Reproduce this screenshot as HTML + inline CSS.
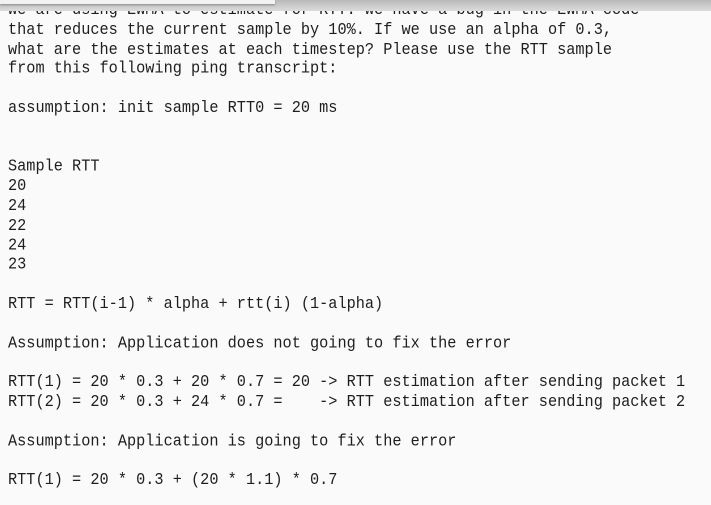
<!DOCTYPE html>
<html><head><style>
html,body{margin:0;padding:0;width:711px;height:505px;overflow:hidden;background:#fafafa;}
pre{position:absolute;left:8px;top:1px;margin:0;font-family:"Liberation Mono",monospace;font-size:15.25px;line-height:19.58px;color:#1e1e1e;transform:scaleY(1.1);transform-origin:0 0;}
.bar{position:absolute;left:0;top:0;width:711px;height:11px;background:linear-gradient(#b9b9b9,#dcdcdc);}
.box{position:absolute;left:0;top:0;width:275px;height:4px;background:#f2f2f2;box-shadow:0 1px 2px #888;}
</style></head><body>
<pre style="line-height:17.8px">We are using EWMA to estimate for RTT. We have a bug in the EWMA code
that reduces the current sample by 10%. If we use an alpha of 0.3,
what are the estimates at each timestep? Please use the RTT sample
from this following ping transcript:

assumption: init sample RTT0 = 20 ms


Sample RTT
20
24
22
24
23

RTT = RTT(i-1) * alpha + rtt(i) (1-alpha)

Assumption: Application does not going to fix the error

RTT(1) = 20 * 0.3 + 20 * 0.7 = 20 -> RTT estimation after sending packet 1
RTT(2) = 20 * 0.3 + 24 * 0.7 =    -> RTT estimation after sending packet 2

Assumption: Application is going to fix the error

RTT(1) = 20 * 0.3 + (20 * 1.1) * 0.7
</pre>
<div class="bar"></div><div class="box"></div>
</body></html>
